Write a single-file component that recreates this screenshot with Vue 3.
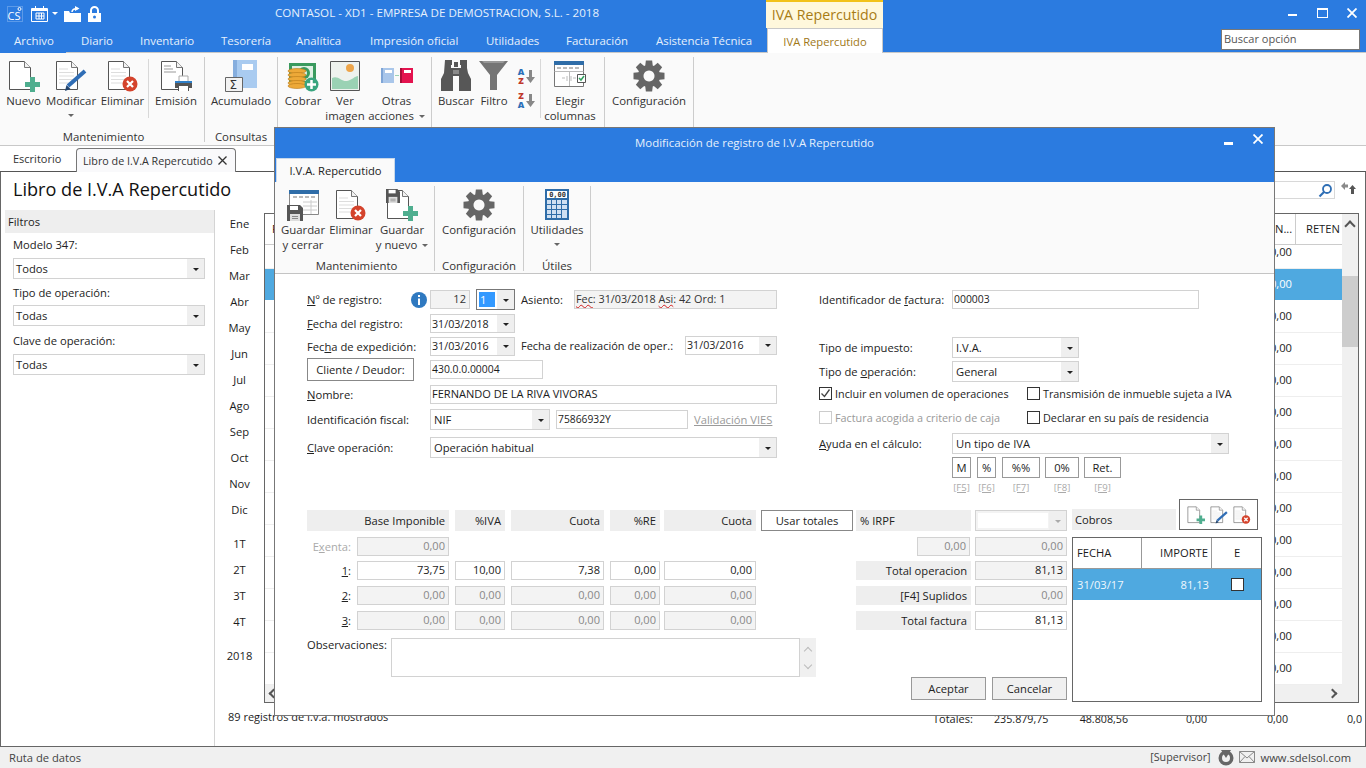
<script setup>
const menu = ['Archivo','Diario','Inventario','Tesorería','Analítica','Impresión oficial','Utilidades','Facturación','Asistencia Técnica']
const months = ['Ene','Feb','Mar','Abr','May','Jun','Jul','Ago','Sep','Oct','Nov','Dic']
const quarters = ['1T','2T','3T','4T']
const rowsBg = Array.from({length:14},(_,i)=>i)
const helpers = [
  {t:'M',k:'[F5]',c:'h1'},{t:'%',k:'[F6]',c:'h1'},{t:'%%',k:'[F7]',c:'h2'},{t:'0%',k:'[F8]',c:'h3'},{t:'Ret.',k:'[F9]',c:'h4'}
]
function gear(){
  const cx=16,cy=16,R=15.8,r=11.2,n=8
  const pts=[]
  for(let i=0;i<n;i++){
    const a=i*2*Math.PI/n
    const w=0.2,w2=0.29
    const p=(rad,ang)=>`${(cx+rad*Math.sin(ang)).toFixed(2)} ${(cy-rad*Math.cos(ang)).toFixed(2)}`
    pts.push(p(r,a-w2-0.05),p(R,a-w),p(R,a+w),p(r,a+w2+0.05))
  }
  return 'M'+pts.join('L')+'Z M16 10.5a5.5 5.5 0 1 0 .01 0Z'
}
const gearPath = gear()
</script>

<template>
  <div class="page">
    <svg class="defs" width="0" height="0" aria-hidden="true">
      <defs>
        <g id="docbase">
          <path d="M1.5 1.5h15l6 6v22h-21z" fill="#fff" stroke="#555"/>
          <path d="M16.5 1.5v6h6" fill="#f2f2f2" stroke="#777"/>
        </g>
        <g id="doclines"><path d="M4 9h9M4 12.5h15M4 16h15M4 19.5h15M4 23h15" stroke="#ddd"/></g>
        <symbol id="i-new" viewBox="0 0 32 32"><use href="#docbase"/><path d="M22 17h5v5h5v5h-5v5h-5v-5h-5v-5h5z" fill="#4fae8f"/></symbol>
        <symbol id="i-edit" viewBox="0 0 32 32"><use href="#docbase"/><use href="#doclines"/><path d="M13 26L30 11" stroke="#2f6db5" stroke-width="4"/><path d="M10 31l1.500-6 4 4z" fill="#23456e"/></symbol>
        <symbol id="i-del" viewBox="0 0 32 32"><use href="#docbase"/><use href="#doclines"/><circle cx="23" cy="24" r="7.500" fill="#d4432c"/><path d="M20 21l6 6M26 21l-6 6" stroke="#fff" stroke-width="2.200"/></symbol>
        <symbol id="i-floppy" viewBox="0 0 16 16"><path d="M0 0h13l3 3v13H0z" fill="#555"/><path d="M3 1h8v4H3z" fill="#fff"/><path d="M3 9h10v7H3z" fill="#ddd"/><path d="M5 11h6v1H5zM5 13h6v1H5z" fill="#888"/></symbol>
      </defs>
    </svg>

    <header class="titlebar">
      <div class="qat">
        <svg class="q-cs" width="16" height="16" viewBox="0 0 16 16"><rect x="0.500" y="0.500" width="15" height="15" fill="none" stroke="#5c9ae8"/><text x="0.500" y="13.500" font-size="11" fill="#fff" font-family="Open Sans,sans-serif">CS</text><circle cx="12.500" cy="3" r="1.500" fill="none" stroke="#fff"/></svg>
        <svg class="q-cal" width="17" height="16" viewBox="0 0 17 16"><path d="M.5 2.500h16v13H.5z" fill="none" stroke="#fff"/><path d="M1 2h15v3H1zM4 0h1v3H4zM12 0h1v3h-1z" fill="#fff"/><path d="M5 7h8v6H5zM8 7v6M10.500 7v6M5 10h8" fill="none" stroke="#fff"/></svg>
        <span class="q-arrow"></span>
        <svg class="q-fold" width="17" height="16" viewBox="0 0 17 16"><path d="M0 5h5l1 2h11v9H0z" fill="#fff"/><path d="M8 6c0-2.500 2-3.500 6-3.500" fill="none" stroke="#fff" stroke-width="1.500"/><path d="M11 0l4.500 2.500L11 5z" fill="#fff"/></svg>
        <svg class="q-lock" width="13" height="16" viewBox="0 0 13 16"><path d="M3 7V4.500a3.500 3.500 0 0 1 7 0V7" fill="none" stroke="#fff" stroke-width="2"/><path d="M0 7h13v9H0z" fill="#fff"/><circle cx="6.500" cy="11" r="1.500" fill="#2b7be0"/></svg>
      </div>
      <div class="apptitle">CONTASOL - XD1 - EMPRESA DE DEMOSTRACION, S.L. - 2018</div>
      <div class="ctxhead">IVA Repercutido</div>
      <div class="winctl">
        <span class="w-min"></span>
        <span class="w-max"></span>
        <svg class="w-x" width="10" height="10" viewBox="0 0 10 10"><path d="M.5.5l9 9M9.500.5l-9 9" stroke="#fff" stroke-width="1.800"/></svg>
      </div>
    </header>

    <nav class="menubar">
      <div v-for="m in menu" :key="m" class="menuitem">{{ m }}</div>
      <div class="menuctx">IVA Repercutido</div>
      <div class="searchopt">Buscar opción</div>
    </nav>

    <section class="ribbon">
      <div class="grp g1">
        <div class="items">
          <div class="rb wa"><svg class="ic" viewBox="0 0 32 32"><use href="#i-new"/></svg><span>Nuevo</span></div>
          <div class="rb wb"><svg class="ic" viewBox="0 0 32 32"><use href="#i-edit"/></svg><span>Modificar</span><i class="dd"></i></div>
          <div class="rb wc"><svg class="ic" viewBox="0 0 32 32"><use href="#i-del"/></svg><span>Eliminar</span></div>
          <div class="vsep"></div>
          <div class="rb wd"><svg class="ic" viewBox="0 0 32 32"><use href="#docbase"/><path d="M4 6h7M4 9h9M4 12h12" stroke="#999"/><path d="M19 16h9v6h-9z" fill="#fff" stroke="#aaa"/><path d="M15 21h17v7h-3v3H18v-3h-3z" fill="#555"/><path d="M15 21h17v2H15z" fill="#2f7fc8"/><path d="M19 26h9v5h-9z" fill="#fff"/></svg><span>Emisión</span></div>
        </div>
        <div class="grplabel">Mantenimiento</div>
      </div>
      <div class="grp g2">
        <div class="items">
          <div class="rb we"><svg class="ic" viewBox="0 0 32 32"><path d="M8 0h24v28H8z" fill="#a9cbf0"/><path d="M8 0h4v28H8z" fill="#86aede"/><path d="M17 4h11v6H17z" fill="#fff"/><path d="M.5 17.500h17v14H.5z" fill="#f2f2f2" stroke="#666"/><text x="4.500" y="29" font-size="12" fill="#333" font-family="DejaVu Sans,sans-serif">Σ</text></svg><span>Acumulado</span></div>
        </div>
        <div class="grplabel">Consultas</div>
      </div>
      <div class="grp g3">
        <div class="items">
          <div class="rb wf"><svg class="ic" viewBox="0 0 32 32"><path d="M2 3h27v21H2z" fill="#3a9a5e"/><path d="M5 6h21v15H5z" fill="#dff0e4"/><circle cx="17" cy="13" r="6" fill="#3a9a5e"/><circle cx="17" cy="13" r="3" fill="#dff0e4"/><g fill="#eda938" stroke="#b97a1a" stroke-width=".6"><ellipse cx="10" cy="11" rx="9" ry="2.500"/><ellipse cx="10" cy="15" rx="9" ry="2.500"/><ellipse cx="10" cy="19" rx="9" ry="2.500"/><ellipse cx="10" cy="23" rx="9" ry="2.500"/><ellipse cx="10" cy="26" rx="9" ry="2.500"/></g><circle cx="24.500" cy="24.500" r="7" fill="#39a57f"/><path d="M24.500 20v9M20 24.500h9" stroke="#fff" stroke-width="2.500"/></svg><span>Cobrar</span></div>
          <div class="rb wg"><svg class="ic" viewBox="0 0 32 32"><path d="M1.500 1.500h29v29h-29z" fill="#eef2ee" stroke="#555"/><circle cx="21" cy="8" r="4" fill="#eda54a"/><path d="M3 18c6-3 10 4 15 3s8-5 11-5v13H3z" fill="#9ad2b4"/></svg><span>Ver<br>imagen</span></div>
          <div class="rb wh"><svg class="ic" viewBox="0 0 32 32"><path d="M0 8h13v15H0z" fill="#a9c6ea"/><path d="M0 8h2v15H0z" fill="#7fa5d6"/><path d="M4 10h7v3H4z" fill="#fff"/><path d="M14 15h4v1h-4z" fill="#9ad2b4"/><path d="M19 8h13v15H19z" fill="#e4134f"/><path d="M19 8h2v15h-2z" fill="#a80c38"/><path d="M23 10h7v3h-7z" fill="#fff"/></svg><span>Otras<br>acciones <i class="ddi"></i></span></div>
        </div>
      </div>
      <div class="grp g4">
        <div class="items">
          <div class="rb wi"><svg class="ic" viewBox="0 0 32 32"><path d="M5 0h7v5h-1v3h10V5h-1V0h7v8l1 5 3 6v12H19V16h-6v15H1V19l3-6z" fill="#575757"/><path d="M14 2h4v5h-4z" fill="#575757"/><path d="M13 10h6v4h-6z" fill="#8a8a8a"/></svg><span>Buscar</span></div>
          <div class="rb wj"><svg class="ic" viewBox="0 0 32 32"><path d="M1 1h29L19 15v15h-7V15z" fill="#757575"/><path d="M4 1h23l-2 2H6z" fill="#999"/></svg><span>Filtro</span></div>
          <div class="sortbox">
            <div class="sortitem"><span class="sl"><b class="sa">A</b><b class="sz">Z</b></span><svg width="9" height="13" viewBox="0 0 9 13"><path d="M3 0h3v7h3l-4.500 6L0 7h3z" fill="#888"/></svg></div>
            <div class="sortitem"><span class="sl"><b class="sz">Z</b><b class="sa">A</b></span><svg width="9" height="13" viewBox="0 0 9 13"><path d="M3 0h3v7h3l-4.500 6L0 7h3z" fill="#888"/></svg></div>
          </div>
          <div class="vsep v2"></div>
          <div class="rb wk"><svg class="ic" viewBox="0 0 32 32"><path d="M.5 1.500h29v25H.5z" fill="#fff" stroke="#777"/><path d="M0 1h30v4H0z" fill="#2f6da8"/><path d="M3 8h4M9 8h4M15 8h4M21 8h4" stroke="#777"/><path d="M.5 11.500h29M15.500 11v15M8 18h3M19 18h3M13 16v5M17 16v5" stroke="#bbb"/><path d="M23.500 14.500h8v8h-8z" fill="#fff" stroke="#555"/><path d="M25 18l2 2 3-4" stroke="#2fa05e" fill="none" stroke-width="1.500"/></svg><span>Elegir<br>columnas</span></div>
        </div>
      </div>
      <div class="grp g5">
        <div class="items">
          <div class="rb wl"><svg class="ic" viewBox="0 0 32 32"><path :d="gearPath" fill="#666" fill-rule="evenodd"/></svg><span>Configuración</span></div>
        </div>
      </div>
    </section>

    <div class="doctabs">
      <div class="dtab">Escritorio</div>
      <div class="dtab active">Libro de I.V.A Repercutido<svg width="9" height="9" viewBox="0 0 9 9"><path d="M.5.5l8 8M8.500.5l-8 8" stroke="#333" stroke-width="1.300"/></svg></div>
      <div class="dtabfill"></div>
    </div>

    <main class="frame">
      <div class="headline">
        <h1>Libro de I.V.A Repercutido</h1>
        <div class="searchwrap">
          <div class="gridsearch"><svg width="15" height="15" viewBox="0 0 15 15"><circle cx="9" cy="6" r="4" fill="none" stroke="#2f6fb5" stroke-width="1.800"/><path d="M6 9l-4.500 4.500" stroke="#2f6fb5" stroke-width="2.200"/></svg></div>
          <svg width="15" height="14" viewBox="0 0 15 14"><path d="M0 5l4-4v2.500h3v3H4V9z" fill="#8a8a8a"/><path d="M15 8l-3.500-4L8 8h2v5h3V8z" fill="#555"/></svg>
        </div>
      </div>
      <div class="workspace">
        <aside class="filters">
          <div class="filterhead">Filtros</div>
          <label class="fl fl1">Modelo 347:</label>
          <div class="combo fc"><span>Todos</span><b class="arrow"></b></div>
          <label class="fl fl2">Tipo de operación:</label>
          <div class="combo fc"><span>Todas</span><b class="arrow"></b></div>
          <label class="fl fl3">Clave de operación:</label>
          <div class="combo fc"><span>Todas</span><b class="arrow"></b></div>
        </aside>
        <div class="rightpane">
          <div class="panemain">
            <div class="months">
              <div v-for="m in months" :key="m">{{ m }}</div>
              <div v-for="(q,i) in quarters" :key="q" :class="{ firstq: i===0 }">{{ q }}</div>
              <div class="firstq">2018</div>
            </div>
            <div class="bgtable">
              <div class="bgmain">
                <div class="bgcols">
                  <div class="bghead">
                    <div class="hc hfill">F</div>
                    <div class="hc hn">N...</div>
                    <div class="hc hr">RETEN</div>
                  </div>
                  <div v-for="i in rowsBg" :key="i" class="bgrow" :class="{ first: i===0, sel: i===1 }"><span>0,00</span></div>
                </div>
                <div class="vscroll"><i class="chev"></i><div class="thumb"></div></div>
              </div>
              <div class="hscroll"><i class="chl"></i><i class="chr"></i></div>
            </div>
          </div>
          <div class="totals">
            <span class="t0">89 registros de I.v.a. mostrados</span>
            <span class="t1">Totales:</span>
            <span class="t2">235.879,75</span>
            <span class="t3">48.808,56</span>
            <span class="t4">0,00</span>
            <span class="t5">0,00</span>
            <span class="t6">0,00</span>
          </div>
        </div>
      </div>
    </main>

    <footer class="status">
      <span class="st-l">Ruta de datos</span>
      <span class="st-sp"></span>
      <span class="st-s">[Supervisor]</span>
      <svg class="st-i" width="16" height="17" viewBox="0 0 16 17"><circle cx="8" cy="9" r="7.500" fill="#666"/><circle cx="8" cy="9" r="4" fill="#f0f0f0"/><path d="M3 1h10L8 9z" fill="#666"/></svg>
      <svg class="st-e" width="16" height="12" viewBox="0 0 16 12"><path d="M.5.5h15v11H.5zM.5.5L8 7l7.500-6.500M.5 11.500L6 5.500M15.500 11.500L10 5.500" fill="none" stroke="#888"/></svg>
      <span class="st-w">www.sdelsol.com</span>
    </footer>

    <!-- modal window -->
    <div class="modal">
      <div class="m-top">
        <div class="m-title">Modificación de registro de I.V.A Repercutido</div>
        <div class="m-ctl">
          <span class="m-min"></span>
          <svg width="10" height="10" viewBox="0 0 10 10"><path d="M.5.5l9 9M9.500.5l-9 9" stroke="#fff" stroke-width="1.800"/></svg>
        </div>
        <div class="m-tab">I.V.A. Repercutido</div>
      </div>
      <div class="m-ribbon">
        <div class="mg mg1">
          <div class="mitems">
            <div class="mb b1"><svg class="ic" viewBox="0 0 32 32"><path d="M2.500 1.500h29v24h-29z" fill="#fff" stroke="#888"/><path d="M2 1h30v4H2z" fill="#2f6da8"/><path d="M6 8h4M12 8h4M18 8h4M24 8h4" stroke="#777"/><path d="M16 13h14M16 17h14M16 21h14M24 11v14" stroke="#ccc"/><svg x="0" y="16" width="16" height="16" viewBox="0 0 16 16"><use href="#i-floppy"/></svg></svg><span>Guardar<br>y cerrar</span></div>
            <div class="mb b2"><svg class="ic" viewBox="0 0 32 32"><use href="#i-del"/></svg><span>Eliminar</span></div>
            <div class="mb b3"><svg class="ic" viewBox="0 0 32 32"><use href="#i-new"/><svg x="0" y="0" width="14" height="14" viewBox="0 0 16 16"><use href="#i-floppy"/></svg></svg><span>Guardar<br>y nuevo <i class="ddi"></i></span></div>
          </div>
          <div class="grplabel mgl">Mantenimiento</div>
        </div>
        <div class="mg mg2">
          <div class="mitems">
            <div class="mb b4"><svg class="ic" viewBox="0 0 32 32"><path :d="gearPath" fill="#666" fill-rule="evenodd"/></svg><span>Configuración</span></div>
          </div>
          <div class="grplabel mgl">Configuración</div>
        </div>
        <div class="mg mg3">
          <div class="mitems">
            <div class="mb b5"><svg class="ic" viewBox="0 0 32 32"><path d="M4 0h24v31H4z" fill="#2f6da8"/><path d="M6 2h20v7H6z" fill="#fff"/><text x="25" y="8" font-size="7" font-weight="700" text-anchor="end" fill="#333" font-family="DejaVu Sans Mono,monospace">0,00</text><path d="M6 11h4v4H6zM11 11h4v4h-4zM16 11h4v4h-4zM21 11h5v4h-5zM6 16h4v4H6zM11 16h4v4h-4zM16 16h4v4h-4zM21 16h5v4h-5zM6 21h4v4H6zM11 21h4v4h-4zM16 21h4v4h-4zM21 21h5v8h-5zM6 26h4v3H6zM11 26h4v3h-4zM16 26h4v3h-4z" fill="#cfe0f2"/></svg><span>Utilidades</span><i class="dd"></i></div>
          </div>
          <div class="grplabel mgl">Útiles</div>
        </div>
      </div>

      <div class="m-form">
        <div class="topform">
          <div class="leftcol">
            <div class="row rh21">
              <label class="l104"><u>N</u>º de registro:</label>
              <svg class="info" width="16" height="16" viewBox="0 0 16 16"><circle cx="8" cy="8" r="8" fill="#2f79c0"/><path d="M7 3h2v2H7zM7 6.500h2V13H7z" fill="#fff"/></svg>
              <div class="inp dis right w40">12</div>
              <div class="combo dark w39"><span class="selnum">1</span><b class="arrow"></b></div>
              <label class="l53">Asiento:</label>
              <div class="inp dis w203"><span class="wavy">Fec</span>: 31/03/2018 <span class="wavy">Asi</span>: 42 Ord: 1</div>
            </div>
            <div class="row rh19 m4">
              <label class="l123"><u>F</u>echa del registro:</label>
              <div class="combo w85"><span>31/03/2018</span><b class="arrow"></b></div>
            </div>
            <div class="row rh20 m3">
              <label class="l123">Fec<u>h</u>a de expedición:</label>
              <div class="combo w85"><span>31/03/2016</span><b class="arrow"></b></div>
              <label class="l164 up1">Fecha de realización de oper.:</label>
              <div class="combo w92 up1"><span>31/03/2016</span><b class="arrow"></b></div>
            </div>
            <div class="row rh23 m2">
              <button class="btn bc">Cliente / Deudor:</button>
              <div class="inp w113">430.0.0.00004</div>
            </div>
            <div class="row rh19 m4">
              <label class="l123"><u>N</u>ombre:</label>
              <div class="inp w347">FERNANDO DE LA RIVA VIVORAS</div>
            </div>
            <div class="row rh21 m5">
              <label class="l123">Identificación fiscal:</label>
              <div class="combo w120 tall"><span>NIF</span><b class="arrow"></b></div>
              <div class="inp w132">75866932Y</div>
              <a class="vies">Validación VIES</a>
            </div>
            <div class="row rh21 m7">
              <label class="l123"><u>C</u>lave operación:</label>
              <div class="combo w347 tall"><span>Operación habitual</span><b class="arrow"></b></div>
            </div>
          </div>
          <div class="rightcol">
            <div class="row rh19 m1">
              <label class="l133">Identificador de <u>f</u>actura:</label>
              <div class="inp w247">000003</div>
            </div>
            <div class="row rh21 m28">
              <label class="l133">Tipo de impuesto:</label>
              <div class="combo w127 tall"><span>I.V.A.</span><b class="arrow"></b></div>
            </div>
            <div class="row rh21 m3">
              <label class="l133">Tipo de <u>o</u>peración:</label>
              <div class="combo w127 tall"><span>General</span><b class="arrow"></b></div>
            </div>
            <div class="row rh18 m2">
              <div class="chk c208"><span class="box"><svg width="11" height="11" viewBox="0 0 11 11"><path d="M1.500 5.500l3 3 5-7" fill="none" stroke="#444" stroke-width="1.300"/></svg></span>Incluir en volumen de operaciones</div>
              <div class="chk"><span class="box"></span>Transmisión de inmueble sujeta a IVA</div>
            </div>
            <div class="row rh18 m6">
              <div class="chk c208 off"><span class="box"></span>Factura acogida a criterio de caja</div>
              <div class="chk"><span class="box"></span>Declarar en su país de residencia</div>
            </div>
            <div class="row rh21 m7">
              <label class="l133"><u>A</u>yuda en el cálculo:</label>
              <div class="combo w277 tall"><span>Un tipo de IVA</span><b class="arrow"></b></div>
            </div>
            <div class="helpers">
              <div v-for="h in helpers" :key="h.k" class="helper" :class="h.c">
                <button class="btn hb">{{ h.t }}</button>
                <a>{{ h.k }}</a>
              </div>
            </div>
          </div>
        </div>

        <div class="lower">
          <div class="amounts">
            <div class="gh a-base hd">Base Imponible</div>
            <div class="gh a-iva hd">%IVA</div>
            <div class="gh a-cu hd">Cuota</div>
            <div class="gh a-re hd">%RE</div>
            <div class="gh a-cu2 hd">Cuota</div>
            <button class="btn a-ut hd">Usar totales</button>
            <div class="gh a-ir hd left">% IRPF</div>
            <div class="combo a-val hd disc"><span class="whitebox"></span><b class="arrow lt"></b></div>

            <div class="rl off ex">E<u>x</u>enta:</div>
            <div class="inp dis right a-b ex">0,00</div>
            <div class="inp dis right a-irs ex">0,00</div>
            <div class="inp dis right a-val ex">0,00</div>

            <div class="rl ra"><u>1</u>:</div>
            <div class="inp right a-b ra">73,75</div>
            <div class="inp right a-iva ra">10,00</div>
            <div class="inp right a-cu ra">7,38</div>
            <div class="inp right a-re ra">0,00</div>
            <div class="inp right a-cu2 ra">0,00</div>
            <div class="gh a-ir ra">Total operacion</div>
            <div class="inp right a-val ra greyval">81,13</div>

            <div class="rl rb2"><u>2</u>:</div>
            <div class="inp dis right a-b rb2">0,00</div>
            <div class="inp dis right a-iva rb2">0,00</div>
            <div class="inp dis right a-cu rb2">0,00</div>
            <div class="inp dis right a-re rb2">0,00</div>
            <div class="inp dis right a-cu2 rb2">0,00</div>
            <div class="gh a-ir rb2">[F4] Suplidos</div>
            <div class="inp dis right a-val rb2">0,00</div>

            <div class="rl rc"><u>3</u>:</div>
            <div class="inp dis right a-b rc">0,00</div>
            <div class="inp dis right a-iva rc">0,00</div>
            <div class="inp dis right a-cu rc">0,00</div>
            <div class="inp dis right a-re rc">0,00</div>
            <div class="inp dis right a-cu2 rc">0,00</div>
            <div class="gh a-ir rc">Total factura</div>
            <div class="inp right a-val rc">81,13</div>

            <div class="obs">
              <label>Observaciones:</label>
              <div class="obsbox"></div>
              <div class="obsscroll"><i class="cu"></i><i class="cd"></i></div>
            </div>
            <div class="actions">
              <button class="btn act">Aceptar</button>
              <button class="btn act">Cancelar</button>
            </div>
          </div>

          <div class="cobros">
            <div class="cobhead">
              <div class="cobtitle">Cobros</div>
              <div class="cobtools">
                <svg width="18" height="18" viewBox="0 0 32 32"><use href="#i-new"/></svg>
                <svg width="18" height="18" viewBox="0 0 32 32"><use href="#i-edit"/></svg>
                <svg width="18" height="18" viewBox="0 0 32 32"><use href="#i-del"/></svg>
              </div>
            </div>
            <div class="cobtable">
              <div class="cobrow chead">
                <span class="c1">FECHA</span><span class="c2">IMPORTE</span><span class="c3">E</span>
              </div>
              <div class="cobrow csel">
                <span class="c1">31/03/17</span><span class="c2">81,13</span><span class="c3"><i class="cbx"></i></span>
              </div>
            </div>
          </div>
        </div>
      </div>
    </div>
  </div>
</template>

<style>
html,body{margin:0;padding:0;background:#fff}
</style>

<style scoped>
.page{width:1366px;height:768px;position:relative;overflow:hidden;display:flex;flex-direction:column;font-family:"Open Sans",sans-serif;font-size:11.2px;color:#1c1c1c;background:#fff}
.defs{position:absolute}
.titlebar{height:28px;flex:none;background:#2b7be0;display:flex;color:#fff}
.qat{width:275px;display:flex;align-items:flex-start;padding-top:6px;box-sizing:border-box;padding-left:7px}
.q-cal{margin-left:8px}
.q-arrow{width:0;height:0;border:3px solid transparent;border-top:3px solid #fff;border-bottom:0;margin:6px 0 0 4px}
.q-fold{margin-left:6px}
.q-lock{margin-left:7px}
.apptitle{width:491px;line-height:26px;font-size:11.6px;color:#e6f0fc;white-space:nowrap}
.ctxhead{width:117px;height:28px;box-sizing:border-box;background:#fff8dc;border-top:2px solid #f2c21a;color:#a87c14;font-size:14.2px;line-height:26px;text-align:center}
.winctl{flex:1;display:flex;align-items:flex-start;padding-left:405px}
.w-min{width:9px;height:2px;background:#fff;margin-top:14px}
.w-max{width:9px;height:7px;border:1px solid #fff;border-top-width:2px;margin:8px 0 0 20px}
.w-x{margin:8px 0 0 19px}
.menubar{height:24px;flex:none;background:#2b7be0;display:grid;grid-template-columns:81px 59px 81px 75px 74px 116px 80px 90px 111px 116px 338px 139px;color:#e6f0fc;font-size:11.45px}
.menuitem{line-height:25px;white-space:nowrap}
.menuitem:first-child{padding-left:14px;width:66px;box-sizing:border-box;height:25px;background:#2b7be0;position:relative;z-index:1}
.menuctx{background:#fff;border:1px solid #c8c8c8;border-bottom:0;height:25px;line-height:25px;text-align:center;color:#a07818;box-sizing:border-box;position:relative;z-index:1;font-size:11.2px}
.searchopt{grid-column:12;grid-row:1;height:21px;box-sizing:border-box;margin-top:1px;background:#fff;border:1px solid #777;color:#555;line-height:18px;padding-left:2px;font-size:11px}
.ribbon{height:92px;flex:none;background:#fafafa;border-top:1px solid #c8c8c8;border-bottom:1px solid #c8c8c8;display:flex;font-size:11.4px}
.grp{display:flex;flex-direction:column;border-right:1px solid #ccc;margin:4px 0 3px;box-sizing:border-box;height:85px}
.g1{width:205px;padding-left:3px}
.g2{width:73px}
.g3{width:154px}
.g4{width:173px}
.g5{width:89px}
.items{display:flex;flex:1}
.rb,.mb{display:flex;flex-direction:column;align-items:center;text-align:center;line-height:15px;box-sizing:border-box;padding-top:3px}
.rb span,.mb span{margin-top:1px;white-space:nowrap;color:#333}
.ic{width:32px;height:32px;display:block;flex:none}
.wa{width:41px}.wb{width:54px}.wc{width:49px}.wd{width:52px}
.we{width:72px}.wf{width:50px}.wg{width:34px}.wh{width:69px}
.wi{width:48px}.wj{width:28px}.wk{width:58px}.wl{width:88px}
.vsep{width:1px;background:#d8d8d8;height:59px;margin:2px 1px 0 1px}
.v2{margin:2px 0 0 0;height:59px}
.sortbox{width:32px;display:flex;flex-direction:column;padding:11px 0 0 9px;box-sizing:border-box;gap:7px}
.sortitem{display:flex;align-items:center;height:17px;gap:1px}
.sl{display:flex;flex-direction:column;width:8px;font-size:9px;line-height:8.5px;font-weight:700;text-align:center}
.sl b{display:block;height:8.5px}
.sa{color:#2a6fb8}
.sz{color:#c0392b}
.dd{display:block;width:0;height:0;border:3.5px solid transparent;border-top:3.5px solid #666;border-bottom:0;margin-top:6px}
.ddi{display:inline-block;width:0;height:0;border:3px solid transparent;border-top:3px solid #666;border-bottom:0;vertical-align:2px;margin-left:2px}
.grplabel{text-align:center;line-height:16px;margin-bottom:0;color:#333;position:relative;top:3px}
.doctabs{height:26px;flex:none;display:flex;align-items:flex-end;box-sizing:border-box;background:#fff}
.dtab{height:24px;line-height:24px;box-sizing:border-box;color:#333;font-size:10.75px}
.dtab:first-child{width:76px;padding-left:13px;border-bottom:1px solid #555;height:25px;font-size:11px}
.dtab.active{width:160px;padding-left:6px;border:1px solid #777;border-bottom:0;border-radius:4px 4px 0 0;background:#f9f9fb;display:flex;align-items:center;gap:5px}
.dtabfill{flex:1;border-bottom:1px solid #555}
.frame{flex:1;min-height:0;display:flex;flex-direction:column;border-left:1px solid #666;border-right:1px solid #666;border-bottom:1px solid #666}
.headline{height:38px;flex:none;display:flex;justify-content:space-between;box-sizing:border-box}
h1{margin:5px 0 0 12px;font-weight:400;font-size:18.1px;line-height:24px;color:#111}
.searchwrap{display:flex;align-items:flex-start;padding:9px 9px 0 0;gap:6px}
.gridsearch{width:100px;height:18px;border:1px solid #d8d8d8;box-sizing:border-box;display:flex;justify-content:flex-end;align-items:center;padding-right:1px}
.workspace{flex:1;min-height:0;display:flex}
.filters{width:214px;box-sizing:border-box;border-right:1px solid #d4d4d4;display:flex;flex-direction:column;flex:none}
.filterhead{margin-left:4px;height:23px;line-height:23px;background:#eee;padding-left:3px;color:#222}
.fl{display:block;margin-left:12px;line-height:16px;color:#222}
.fl1{margin-top:4px}.fl2{margin-top:6px}.fl3{margin-top:7px}
.combo{position:relative;display:flex;align-items:center;box-sizing:border-box;border:1px solid #d2d2d2;background:#fff;height:19px;padding-left:1px;white-space:nowrap}
.combo .arrow{position:absolute;right:0;top:0;bottom:0;width:17px;background:#efefef}
.arrow::after{content:"";position:absolute;left:6px;top:50%;margin-top:-1px;width:0;height:0;border:3px solid transparent;border-top:3px solid #222;border-bottom:0}
.arrow.lt::after{border-top-color:#aaa}
.fc{width:192px;height:21px;margin:5px 0 0 12px;padding-left:2px}
.fl2 + .fc{margin-top:4px}
.rightpane{flex:1;min-width:0;display:flex;flex-direction:column}
.panemain{display:flex;height:493px;flex:none}
.months{width:49px;flex:none;text-align:center;display:flex;flex-direction:column;padding-top:1px}
.months div{height:26px;line-height:26px;flex:none}
.months .firstq{margin-top:8px}
.bgtable{width:1095px;height:490px;margin-top:3px;box-sizing:border-box;border:1px solid #666;display:flex;flex-direction:column;flex:none}
.bgmain{flex:1;min-height:0;display:flex}
.bgcols{flex:1;min-width:0;display:flex;flex-direction:column;overflow:hidden}
.bghead{display:flex;height:31px;flex:none;border-bottom:1px solid #ccc;box-sizing:border-box;line-height:30px}
.hc{box-sizing:border-box;white-space:nowrap;overflow:hidden}
.hfill{flex:1;padding-left:7px;color:#301010}
.hn{width:20px;flex:none;text-align:right;padding-right:3px}
.hr{width:47px;border-left:1px solid #ccc;padding-left:10px;flex:none}
.bgrow{height:32px;flex:none;box-sizing:border-box;text-align:right;padding-right:50px;line-height:30px;border-bottom:1px solid #eee}
.bgrow.first{height:24px;line-height:14px}
.bgrow.sel{background:#4fa9e0;color:#fff;border-bottom:1px solid #fff}
.vscroll{width:16px;background:#f0f0f0;position:relative;flex:none;display:flex;flex-direction:column;align-items:center}
.chev{width:6px;height:6px;border-left:2px solid #555;border-top:2px solid #555;transform:rotate(45deg);margin-top:8px}
.thumb{width:16px;height:71px;background:#cdcdcd;margin-top:46px}
.hscroll{height:17px;background:#f0f0f0;display:flex;justify-content:space-between;align-items:center;padding:0 22px 0 5px;flex:none}
.chl{width:5px;height:5px;border-left:2px solid #555;border-bottom:2px solid #555;transform:rotate(45deg)}
.chr{width:5px;height:5px;border-right:2px solid #555;border-top:2px solid #555;transform:rotate(45deg)}
.totals{flex:1;display:grid;grid-template-columns:13px 705px 61px 54px 80px 79px 81px 59px 15px;align-items:start;padding-top:6px;line-height:16px;white-space:nowrap}
.t0{grid-column:2;margin-top:0;font-size:11px}
.t1,.t2,.t3,.t4,.t5,.t6{margin-top:2px;font-size:10.7px}
.t1{grid-column:3;font-size:11px}.t2{grid-column:4;text-align:right}.t3{grid-column:5;text-align:right}.t4{grid-column:6;text-align:right}.t5{grid-column:7;text-align:right}.t6{grid-column:9;overflow:hidden}
.status{height:21px;flex:none;box-sizing:border-box;background:#f0f0f0;display:flex;align-items:center;color:#444;font-size:11.2px;padding:0 15px 1px 0}
.st-l{margin-left:9px}
.st-sp{flex:1}
.st-s{font-size:10.7px}
.st-i{margin-left:7px}
.st-e{margin-left:5px}
.st-w{margin-left:6px}

.modal{position:absolute;left:274px;top:127px;width:1001px;height:589px;box-sizing:border-box;background:#fff;border:1px solid #777;display:flex;flex-direction:column}
.m-top{height:54px;flex:none;background:#2b7be0;display:flex;flex-direction:column;position:relative;color:#fff}
.m-title{text-align:center;line-height:16px;padding:7px 40px 0 0;color:#e6f0fc;font-size:11.45px}
.m-ctl{position:absolute;right:11px;top:6px;display:flex;align-items:flex-start;gap:20px}
.m-min{width:9px;height:3px;background:#fff;margin-top:8px}
.m-tab{position:absolute;left:1px;bottom:0;width:119px;height:24px;line-height:24px;text-align:center;background:#fafafa;border:1px solid #c8d8ea;border-bottom:0;box-sizing:border-box;color:#222}
.m-ribbon{height:92px;flex:none;box-sizing:border-box;background:#fafafa;border-bottom:1px solid #c4c4c4;display:flex;padding-top:4px;font-size:11.4px}
.mg{display:flex;flex-direction:column;border-right:1px solid #ccc;box-sizing:border-box;height:85px}
.mg1{width:160px;padding-left:4px}
.mg2{width:89px}
.mg3{width:67px}
.mitems{display:flex;flex:1}
.b1{width:48px}.b2{width:48px}.b3{width:54px}.b4{width:88px}.b5{width:66px}
.mgl{top:3px}
.m-form{flex:1;min-height:0;display:flex;flex-direction:column;padding:15px 0 0 32px}
.topform{display:flex;gap:42px}
.leftcol{width:470px;flex:none}
.rightcol{width:412px;flex:none}
.row{display:flex;align-items:center;white-space:nowrap}
.rh18{height:18px}.rh19{height:19px}.rh20{height:20px}.rh21{height:21px}.rh23{height:23px}
.m1{margin-top:1px}.m2{margin-top:2px}.m3{margin-top:3px}.m4{margin-top:4px}.m5{margin-top:5px}.m6{margin-top:6px}.m7{margin-top:7px}.m28{margin-top:28px}
label{color:#222}
.l104{width:104px;flex:none}.l123{width:123px;flex:none}.l133{width:133px;flex:none}.l53{width:53px;margin-left:6px;flex:none}.l164{width:164px;margin-left:6px;flex:none;font-size:11px}
.up1{position:relative;top:-1px}
.info{margin-right:3px;flex:none}
.inp{box-sizing:border-box;height:19px;border:1px solid #d2d2d2;background:#fff;padding:0 3px 0 1px;line-height:16px;white-space:nowrap;overflow:hidden;font-size:11.05px}
.inp.dis{background:#f3f3f3;color:#888}
.inp.right{text-align:right}
.w40.dis,.w203.dis{color:#333}
.w40{width:40px}.w39{width:39px;margin-left:6px}.w85{width:85px;font-size:10.7px}.w92{width:92px;height:19px;font-size:10.7px}.w113{width:113px;font-size:10.4px}.w120{width:120px}.w127{width:127px}.w132{width:132px;margin-left:6px;font-size:10.3px}.w203{width:203px;font-size:10.8px}.w247{width:247px;font-size:10.4px}.w277{width:277px}.w347{width:347px}
.tall{height:21px;padding-left:3px}
.combo.dark{border-color:#777;height:21px;padding-left:2px}
.selnum{background:#3399ff;color:#fff;width:16px;height:15px;line-height:15px;padding-left:1px;box-sizing:border-box}
.wavy{text-decoration:underline wavy #d02020 1px}
.btn{font:inherit;background:#fff;border:1px solid #888;color:#222;padding:0;box-sizing:border-box;height:100%;line-height:1}
.bc{width:107px;margin-right:16px;height:23px}
.vies{margin-left:6px;color:#9a9a9a;text-decoration:underline}
.chk{display:flex;align-items:center;flex:none;font-size:10.8px}
.c208{width:208px}
.box{width:13px;height:13px;box-sizing:border-box;border:1px solid #333;background:#fff;margin-right:3px;flex:none;display:flex;align-items:center;justify-content:center}
.chk.off{color:#999}
.chk.off .box{border-color:#ccc}
.helpers{display:flex;margin:3px 0 0 133px;gap:5px}
.helper{display:flex;flex-direction:column;align-items:center}
.h1{width:19px;margin-right:1px}.h2{width:38px}.h3{width:34px}.h4{width:37px}
.hb{height:21px;width:100%;border-color:#999}
.helper a{font-size:9.6px;color:#aaa;text-decoration:underline;line-height:14px;margin-top:3px}
.lower{display:flex;gap:5px;margin-top:4px}
.amounts{width:760px;flex:none;display:grid;grid-template-columns:[lab]50px [base]92px [g1]6px [iva]50px [g2]6px [cu]93px [g3]6px [re]50px [g4]4px [cu2]92px [g5]5px [ut]92px [g6]3px [ir]115px [g7]4px [val]92px [end];grid-template-rows:[t]11px [hd]21px 6px [ex]19px 5px [ra]19px 6px [rb]19px 6px [rc]19px 8px [ob]39px [bt]23px}
.hd{grid-row:hd}.ex{grid-row:ex}.ra{grid-row:ra}.rb2{grid-row:rb}.rc{grid-row:rc}
.gh{background:#eee;text-align:right;padding-right:4px;color:#222;line-height:21px;white-space:nowrap;box-sizing:border-box}
.gh.ra,.gh.rb2,.gh.rc{line-height:19px}
.gh.left{text-align:left;padding-left:4px}
.a-base{grid-column:lab/g1}.a-b{grid-column:base}.a-iva{grid-column:iva}.a-cu{grid-column:cu}.a-re{grid-column:re}.a-cu2{grid-column:cu2}.a-ut{grid-column:ut}.a-ir{grid-column:ir}.a-val{grid-column:val}
.a-irs{grid-column:ir;justify-self:end;width:53px;margin-right:1px}
.rl{grid-column:lab;text-align:right;padding-right:6px;line-height:19px;color:#222}
.rl.off{color:#aaa}
.greyval{background:#f3f3f3}
.disc{padding:2px;background:#f3f3f3;height:21px}
.whitebox{display:block;width:70px;height:15px;background:#fff}
.obs{grid-column:lab/ut;grid-row:ob;display:flex;align-items:flex-start;width:509px}
.obs label{width:84px;line-height:14px;flex:none}
.obsbox{width:409px;height:39px;box-sizing:border-box;border:1px solid #d2d2d2}
.obsscroll{width:16px;height:39px;background:#f0f0f0;display:flex;flex-direction:column;justify-content:space-between;align-items:center;padding:8px 0 7px;box-sizing:border-box}
.cu{width:5px;height:5px;border-left:1px solid #bbb;border-top:1px solid #bbb;transform:rotate(45deg);margin-top:2px}
.cd{width:5px;height:5px;border-right:1px solid #bbb;border-bottom:1px solid #bbb;transform:rotate(45deg);margin-bottom:2px}
.actions{grid-column:ir/end;grid-row:bt;display:flex;justify-content:flex-end;gap:6px}
.act{width:75px;height:23px;background:#f0f0f0;border-color:#999}
.cobros{width:190px;flex:none;display:flex;flex-direction:column}
.cobhead{display:flex;height:31px;align-items:flex-end;gap:3px}
.cobtitle{width:104px;height:21px;line-height:21px;background:#eee;padding-left:3px;box-sizing:border-box}
.cobtools{width:79px;height:31px;border:1px solid #666;box-sizing:border-box;display:flex;align-items:center;justify-content:center;gap:5px}
.cobtable{margin-top:7px;height:165px;border:1px solid #666;box-sizing:border-box}
.cobrow{display:grid;grid-template-columns:69px 70px 1fr;align-items:center}
.chead{height:31px;border-bottom:1px solid #999;box-sizing:border-box}
.chead span{height:100%;line-height:30px;box-sizing:border-box}
.chead .c1,.chead .c2{border-right:1px solid #999}
.c1{padding-left:4px}
.c2{text-align:right;padding-right:3px}
.c3{text-align:center;display:flex;justify-content:center;padding-left:1px}
.chead .c3{display:block}
.csel{height:31px;background:#4fa9e0;color:#eef7fd}
.cbx{width:13px;height:13px;box-sizing:border-box;background:#fff;border:1px solid #333;display:block}
</style>
